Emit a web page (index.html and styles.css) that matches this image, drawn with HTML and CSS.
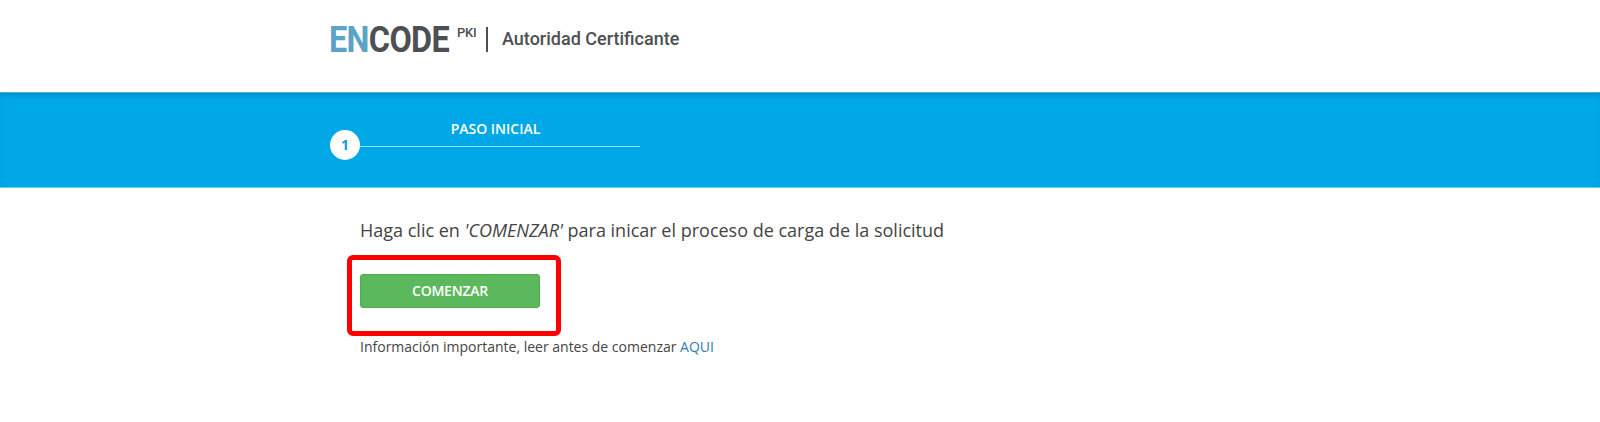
FILE: index.html
```html
<!DOCTYPE html>
<html lang="es">
<head>
<meta charset="utf-8">
<title>Encode PKI</title>
<link rel="stylesheet" href="styles.css">
</head>
<body>
<header class="top">
  <div class="logo">
    <span class="brand-box"><span class="brand"><span class="en">EN</span>CODE</span></span>
    <sup class="pki">PKI</sup>
    <span class="sep"></span>
    <span class="sub">Autoridad Certificante</span>
  </div>
</header>
<section class="band">
  <div class="step">
    <div class="step-label">PASO INICIAL</div>
    <div class="step-row">
      <span class="dot">1</span>
      <span class="rule"></span>
    </div>
  </div>
</section>
<main class="content">
  <p class="lead">Haga clic en <em>'COMENZAR'</em> para inicar el proceso de carga de la solicitud</p>
  <div class="mark">
    <button class="go" type="button">COMENZAR</button>
  </div>
  <p class="info">Información importante, leer antes de comenzar <a href="#">AQUI</a></p>
</main>
</body>
</html>
```

FILE: styles.css
```css
* { box-sizing: border-box; }
html, body { margin: 0; padding: 0; }
body {
  background: #fff;
  color: #444;
  font-family: "Open Sans", "Liberation Sans", sans-serif;
  height: 422px;
  overflow: hidden;
}
.top {
  height: 92px;
  padding: 20px 0 0 329px;
}
.logo {
  display: flex;
  align-items: flex-start;
  height: 40px;
  font-family: Roboto, "Liberation Sans", sans-serif;
  color: #4d4f53;
}
.brand-box {
  width: 128px;
  height: 40px;
}
.brand {
  display: inline-block;
  font-size: 36px;
  line-height: 40px;
  font-weight: 700;
  letter-spacing: -.7px;
  transform: scaleX(.9);
  transform-origin: left center;
}
.en { color: #5ba3c7; }
.pki {
  font-size: 13px;
  line-height: 16px;
  font-weight: 500;
  margin: 5px 0 0 0;
  width: 29px;
  letter-spacing: -.2px;
}
.sep {
  width: 2px;
  height: 25px;
  margin-top: 7px;
  background: #4d4f53;
}
.sub {
  font-size: 18px;
  line-height: 24px;
  font-weight: 500;
  margin: 7px 0 0 14px;
  letter-spacing: 0;
}
.band {
  height: 96px;
  background: #00a8e8;
  border-top: 1px solid #4fb3e0;
  border-bottom: 1px solid #6cc8f0;
  box-shadow: inset 0 5px 5px -3px rgba(0, 100, 150, .45);
  padding: 0 0 0 330px;
}
.step { width: 310px; }
.step-label {
  color: #fff;
  font-size: 14px;
  line-height: 18px;
  font-weight: 600;
  text-align: center;
  padding: 27px 0 0 21px;
  height: 37px;
}
.step-row {
  display: flex;
  align-items: center;
}
.dot {
  flex: none;
  width: 30px;
  height: 30px;
  border-radius: 50%;
  background: #fff;
  color: #1a9ad6;
  font-size: 14px;
  font-weight: 700;
  line-height: 30px;
  text-align: center;
}
.rule {
  flex: 1;
  height: 1px;
  background: #9bdcf5;
  margin-top: 2px;
}
.content { padding: 0 0 0 360px; }
.lead {
  margin: 0;
  padding-top: 30px;
  font-size: 18px;
  line-height: 24px;
  color: #444;
}
.lead em { font-style: italic; }
.mark {
  width: 214px;
  height: 81px;
  margin: 13px 0 0 -13px;
  border: 5px solid #ff0000;
  border-radius: 6px;
  padding: 14px 0 0 8px;
}
.go {
  display: block;
  width: 180px;
  height: 34px;
  padding: 0;
  border: 1px solid #4cae4c;
  border-radius: 3px;
  background: #5cb85c;
  color: #fff;
  font: 600 14px/1 "Open Sans", "Liberation Sans", sans-serif;
  letter-spacing: -.25px;
}
.info {
  margin: 0;
  padding-top: 1px;
  font-size: 14px;
  line-height: 20px;
  color: #444;
}
.info a { color: #337ab7; text-decoration: none; }
```
